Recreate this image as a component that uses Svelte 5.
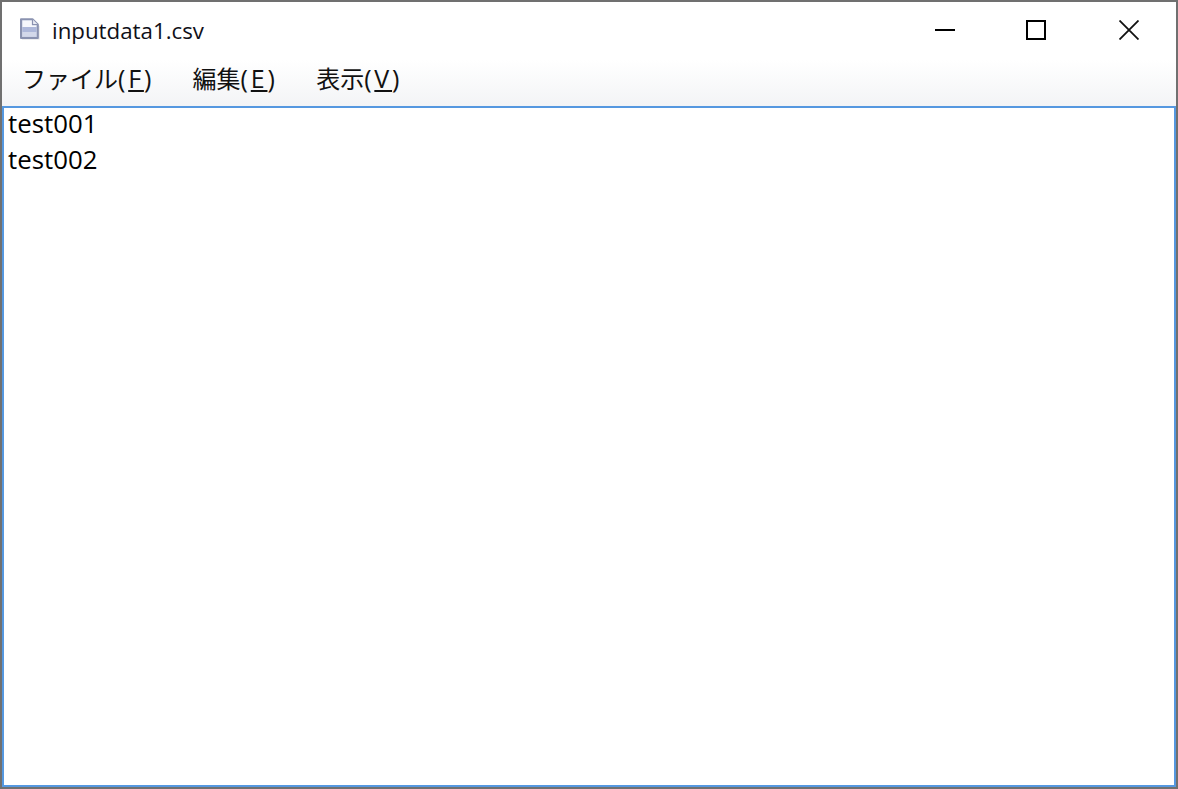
<script lang="ts">
  const menus = [
    { label: "ファイル", key: "F" },
    { label: "編集", key: "E" },
    { label: "表示", key: "V" },
  ];
  const lines = ["test001", "test002"];
</script>

<div class="window">
  <header class="titlebar">
    <svg class="file-icon" width="21" height="22" viewBox="0 0 21 22" aria-hidden="true">
      <path d="M3 2.5H15L20.5 8V21.5H3Z" fill="#dcdce0" />
      <path d="M2 1.2H13.5L18.8 6.5V20H2Z" fill="#c6cce0" stroke="#8a92b0" stroke-width="2" stroke-linejoin="round" />
      <path d="M3.5 2.6H13V7.5H17.3V9H3.5Z" fill="#f6f7fb" />
      <path d="M3.5 9H17.3V14H3.5Z" fill="#aeb8da" />
      <path d="M3.5 14H17.3V18.6H3.5Z" fill="#d3d8ea" />
      <path d="M13.5 1.2V6.5H18.8" fill="#e9ecf4" stroke="#8a92b0" stroke-width="1.2" />
    </svg>
    <span class="title">inputdata1.csv</span>
    <div class="controls">
      <button class="control minimize" aria-label="Minimize">
        <svg width="20" height="20" viewBox="0 0 20 20"><path d="M0 10H20" stroke="#000" stroke-width="2" /></svg>
      </button>
      <button class="control" aria-label="Maximize">
        <svg width="20" height="20" viewBox="0 0 20 20"><rect x="1" y="1" width="18" height="18" fill="none" stroke="#000" stroke-width="2" /></svg>
      </button>
      <button class="control" aria-label="Close">
        <svg width="20" height="20" viewBox="0 0 20 20"><path d="M0.5 0.5L19.5 19.5M19.5 0.5L0.5 19.5" stroke="#111" stroke-width="1.8" /></svg>
      </button>
    </div>
  </header>

  <nav class="menubar">
    {#each menus as menu}
      <span class="menu">{menu.label}<span class="access">(<u>{menu.key}</u>)</span></span>
    {/each}
  </nav>

  <div class="editor">
    {#each lines as line}
      <div class="line">{line}</div>
    {/each}
  </div>
</div>

<style>
  :global(body) {
    margin: 0;
    background: #6f6f6f;
  }

  .window {
    box-sizing: border-box;
    width: 1178px;
    height: 789px;
    border: 2px solid #707070;
    background: #fff;
    display: flex;
    flex-direction: column;
    font-family: "Open Sans", "Noto Sans CJK JP", sans-serif;
    color: #000;
  }

  .titlebar {
    height: 58px;
    flex: none;
    display: flex;
    align-items: center;
    padding-left: 17px;
    background: #fff;
  }

  .file-icon {
    margin-top: -4px;
  }

  .title {
    margin-left: 12px;
    margin-top: -2px;
    font-size: 22.3px;
    color: #101018;
  }

  .controls {
    margin-left: auto;
    display: flex;
    padding-right: 1px;
    padding-bottom: 2px;
  }

  .control {
    width: 93px;
    height: 56px;
    padding: 0;
    border: none;
    background: none;
    display: flex;
    align-items: center;
    justify-content: center;
  }

  .control.minimize {
    width: 89px;
  }

  .menubar {
    height: 46px;
    flex: none;
    display: flex;
    align-items: center;
    gap: 38.5px;
    padding: 0 0 11px 20px;
    box-sizing: border-box;
    background: linear-gradient(#ffffff, #f3f4f6);
    font-size: 24px;
    color: #111;
  }

  .access {
    font-size: 25px;
    letter-spacing: 2.8px;
  }

  .editor {
    flex: 1;
    border: 2px solid #5598e0;
    background: #fff;
    padding: 0 4px;
    font-size: 25.8px;
    line-height: 36px;
  }

  .line {
    position: relative;
    top: -3px;
  }
</style>
